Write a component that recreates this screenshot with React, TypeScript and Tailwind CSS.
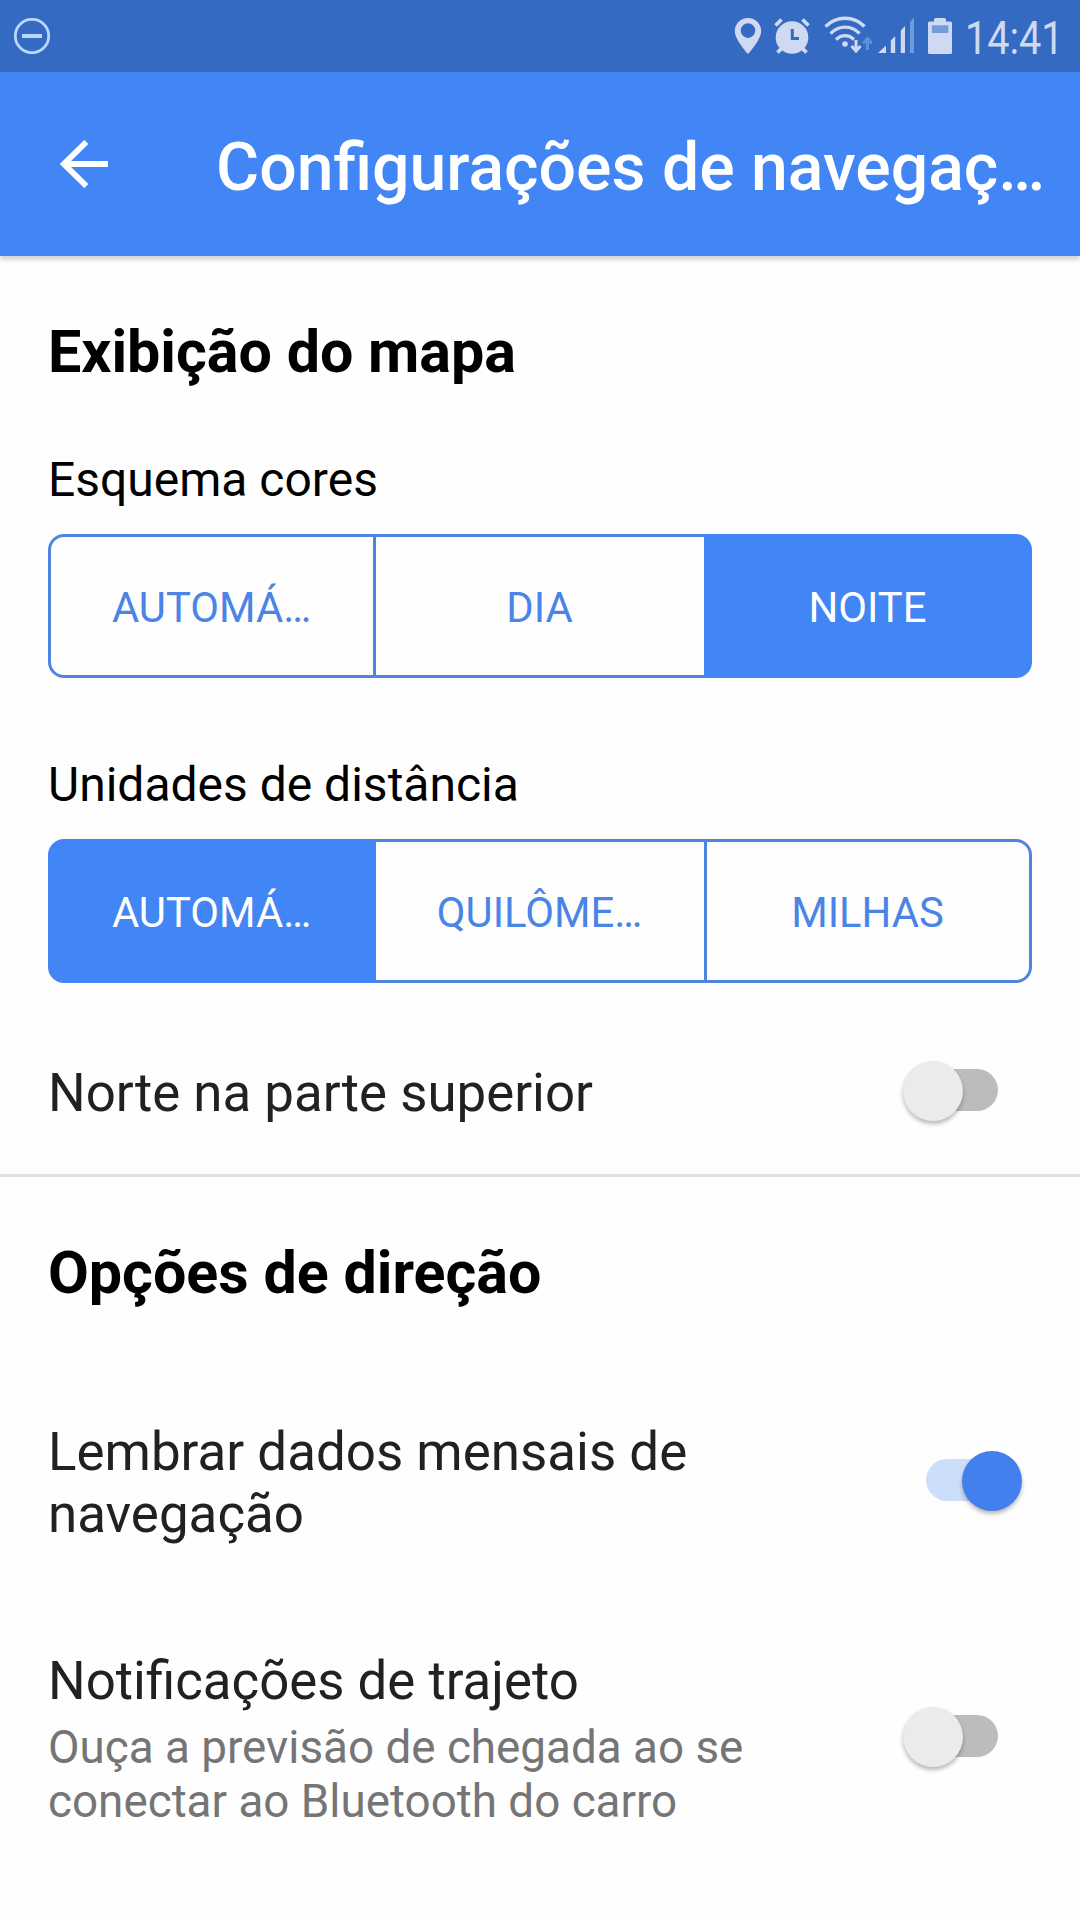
import React, { useState } from "react";
import clsx from "clsx";

interface SegmentedProps {
  label: string;
  options: string[];
  value: number;
  onChange: (index: number) => void;
}

const Segmented: React.FC<SegmentedProps> = ({ label, options, value, onChange }) => (
  <div>
    <p className="text-[48px] leading-[56px] text-black">{label}</p>
    <div className="mt-[26px] flex h-36">
      {options.map((option, index) => (
        <button
          key={option}
          onClick={() => onChange(index)}
          className={clsx(
            "h-full w-[328px] border-y-[3px] pt-1 pr-px text-center text-[41.8px]",
            index === value ? "border-[#4285f4] bg-[#4285f4] text-white" : "border-[#4f85df] text-[#4a84e6]",
            index === 0 && "rounded-l-2xl border-x-[3px]",
            index === 2 && "rounded-r-2xl border-x-[3px]"
          )}
        >
          {option}
        </button>
      ))}
    </div>
  </div>
);

interface ToggleProps {
  checked: boolean;
  onChange: () => void;
}

const Toggle: React.FC<ToggleProps> = ({ checked, onChange }) => (
  <button
    role="switch"
    aria-checked={checked}
    onClick={onChange}
    className={clsx("relative flex h-[60px] w-24 shrink-0 items-center", checked ? "justify-start" : "justify-end")}
  >
    <span className={clsx("h-[42px] w-[90px] rounded-full", checked ? "bg-[#cddefb]" : "bg-[#bcbcbc]")} />
    <span
      className={clsx(
        "absolute top-[0.5px] size-[60px] rounded-full shadow-[0_3px_4px_rgba(0,0,0,0.28)]",
        checked ? "right-[0.5px] bg-[#4281ed]" : "left-[0.5px] bg-[#ebebeb]"
      )}
    />
  </button>
);

const StatusBar = () => (
  <div className="flex h-[72px] items-start bg-[#346ac1] pt-[15px] pl-[14px] text-[#cfdaf2]">
    <svg className="mt-[3px] h-9 w-9 text-[#b9d6fc]" viewBox="0 0 36 36" fill="none" stroke="currentColor">
      <circle cx="18" cy="18" r="16.7" strokeWidth="2.8" />
      <path d="M8 18h20" strokeWidth="4" />
    </svg>

    {/* location */}
    <svg className="mt-[3px] ml-[684px] h-9 w-7" viewBox="0 0 28 36" fill="currentColor">
      <path
        fillRule="evenodd"
        d="M14 0C6.6 0 .8 5.7.8 13c0 8.800 13.200 23 13.200 23s13.200-14.200 13.200-23C27.200 5.700 21.400 0 14 0Zm0 5.300a7.300 7.300 0 1 1 0 14.600 7.300 7.300 0 0 1 0-14.600Z"
      />
    </svg>

    {/* alarm */}
    <svg className="mt-[3px] ml-3 h-9 w-9" viewBox="0 0 36 36">
      <circle cx="18" cy="19.500" r="16.300" fill="currentColor" />
      <path d="m1.500 7.500 6-6M34.500 7.500l-6-6M3.500 34.500l5-5M32.500 34.500l-5-5" stroke="currentColor" strokeWidth="3.800" fill="none" />
      <path d="M18.300 11v9.500H25" stroke="#346ac1" strokeWidth="3" fill="none" />
    </svg>

    {/* wifi with traffic arrows */}
    <svg className="mt-px ml-3.5 h-[38px] w-12" viewBox="0 0 48 38" fill="none" stroke="currentColor">
      <path d="M1.500 10.500C12.500-.5 30 -.5 40.500 10.500" strokeWidth="3.300" />
      <path d="M6.500 17.500C15 9 27.500 9 35.500 17.500" strokeWidth="3.300" />
      <path d="M12 23.500c5.500-5.200 12.500-5.200 18 0" strokeWidth="3.300" />
      <circle cx="21" cy="28" r="2.800" fill="currentColor" stroke="none" />
      <path d="M32 24v11M27.500 30l4.500 5 4.500-5" strokeWidth="3" />
      <path d="M43.500 34V22.500M39 27.500l4.500-5 4.500 5" strokeWidth="3" stroke="#5f8fda" />
    </svg>

    {/* signal */}
    <svg className="mt-[2px] ml-1.5 h-9 w-9" viewBox="0 0 36 36" fill="currentColor">
      <path d="M0 36 8 28.500V36ZM12.800 36V23.500l4.400-4.500v17ZM22.800 36V13.500l4.200-4.500v27Z" />
      <path d="M32 36V5l4-4.500V36Z" fill="#6f9ade" />
    </svg>

    {/* battery */}
    <svg className="mt-[3px] ml-3.5 h-9 w-6" viewBox="0 0 24 36">
      <path d="M6 3.500V1.500Q6 0 7.500 0h9Q18 0 18 1.500v2h4.500Q24 3.500 24 5v29.500q0 1.500-1.500 1.500h-21Q0 36 0 34.500V5Q0 3.500 1.500 3.500Z" fill="currentColor" />
      <path d="M3.800 7.300h16.600v7.700H3.800Z" fill="#719cdc" />
    </svg>

    <span className="-mt-[3px] ml-[13px] origin-left scale-x-[0.87] text-[45.5px] leading-[53px]">14:41</span>
  </div>
);

const App = () => {
  const [scheme, setScheme] = useState(2);
  const [units, setUnits] = useState(0);
  const [northUp, setNorthUp] = useState(false);
  const [reminder, setReminder] = useState(true);
  const [notifications, setNotifications] = useState(false);

  return (
    <div className="h-[1920px] w-[1080px] overflow-hidden bg-[#fefefe] font-['Roboto',sans-serif]">
      <StatusBar />
      <header className="flex h-[184px] items-center bg-[#4285f4] text-white shadow-[0_4px_4px_rgba(0,0,0,0.16)]">
        <svg className="ml-[60px] h-12 w-12" viewBox="0 0 48 48" fill="none" stroke="currentColor" strokeWidth="5.800">
          <path d="M48 24H5M26.300 2 4 24l22.300 22" />
        </svg>
        <h1 className="mt-2 ml-[108px] w-[850px] truncate text-[66.100px] leading-[78px] font-medium">
          Configurações de navegaç…
        </h1>
      </header>

      <section className="border-b-[3px] border-[#e0e0e0] px-12 pt-[61px] pb-[50px]">
        <h2 className="text-[59.2px] leading-[70px] font-bold text-black">Exibição do mapa</h2>
        <div className="mt-[65px] space-y-[79px]">
          <Segmented label="Esquema cores" options={["AUTOMÁ…", "DIA", "NOITE"]} value={scheme} onChange={setScheme} />
          <Segmented label="Unidades de distância" options={["AUTOMÁ…", "QUILÔME…", "MILHAS"]} value={units} onChange={setUnits} />
        </div>
        <div className="mt-[79px] flex h-[62px] items-start justify-between pr-[34px]">
          <p className="text-[52.8px] leading-[62px] text-[#212121]">Norte na parte superior</p>
          <div className="-mt-[2px]">
            <Toggle checked={northUp} onChange={() => setNorthUp(!northUp)} />
          </div>
        </div>
      </section>

      <section className="px-12 pt-[61px]">
        <h2 className="text-[59.2px] leading-[70px] font-bold text-black">Opções de direção</h2>
        <div className="mt-[113px] flex items-start justify-between pr-[10px]">
          <p className="w-[700px] text-[52.9px] leading-[62px] text-[#212121]">Lembrar dados mensais de navegação</p>
          <div className="pt-[29px]">
            <Toggle checked={reminder} onChange={() => setReminder(!reminder)} />
          </div>
        </div>
        <div className="mt-[105px] flex items-start justify-between pr-[34px]">
          <div className="w-[740px]">
            <p className="text-[52.8px] leading-[62px] text-[#212121]">Notificações de trajeto</p>
            <p className="mt-[9px] text-[45.8px] leading-[54px] text-[#757575]">
              Ouça a previsão de chegada ao se
              <br />
              conectar ao Bluetooth do carro
            </p>
          </div>
          <div className="pt-[56px]">
            <Toggle checked={notifications} onChange={() => setNotifications(!notifications)} />
          </div>
        </div>
      </section>
    </div>
  );
};

export default App;
